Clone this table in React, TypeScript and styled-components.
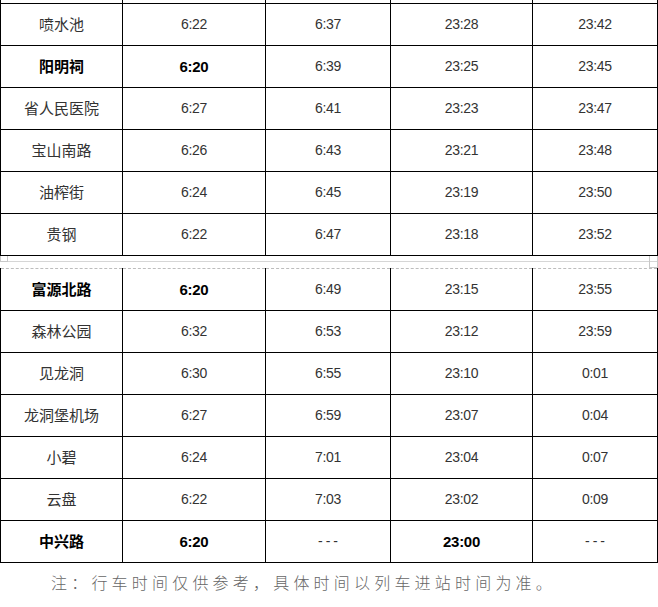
import React from 'react';
import styled, { createGlobalStyle } from 'styled-components';

const GlobalStyle = createGlobalStyle`
  html, body {
    margin: 0;
    padding: 0;
    background: #ffffff;
  }
`;

const Page = styled.div`
  width: 658px;
  background: #ffffff;
  font-family: "Noto Sans CJK SC", "Liberation Sans", sans-serif;
`;

const Table = styled.table`
  width: 657px;
  table-layout: fixed;
  border-collapse: collapse;
`;

const Row = styled.tr<{ $stub?: boolean }>`
  height: ${({ $stub }) => ($stub ? '3px' : '42px')};
`;

const Cell = styled.td<{
  $bold?: boolean;
  $num?: boolean;
  $stub?: boolean;
  $dashedTop?: boolean;
  $dash?: boolean;
}>`
  border: 1px solid #000;
  border-top: ${({ $stub, $dashedTop }) =>
    $stub ? 'none' : $dashedTop ? '1px dashed #bdbdbd' : '1px solid #000'};
  padding: 0 0 ${({ $num }) => ($num ? '0' : '2px')};
  text-align: center;
  vertical-align: middle;
  color: ${({ $bold }) => ($bold ? '#000' : '#333')};
  font-weight: ${({ $bold }) => ($bold ? 700 : 400)};
  font-family: ${({ $num }) =>
    $num ? '"Liberation Sans", "Noto Sans CJK SC", sans-serif' : '"Noto Sans CJK SC", sans-serif'};
  font-size: ${({ $num, $bold }) => ($num ? ($bold ? '15px' : '14px') : '15px')};
  letter-spacing: ${({ $num, $dash }) => ($dash ? '3px' : $num ? '-0.3px' : '0')};
  text-indent: ${({ $dash }) => ($dash ? '3px' : '0')};
  line-height: 1;
`;

const Break = styled.div`
  position: relative;
  height: 5px;
  border-bottom: 1px solid #d6d6d6;
  margin-bottom: 6px;
`;

const Marker = styled.span<{ $side: 'left' | 'right' }>`
  position: absolute;
  top: 0;
  ${({ $side }) =>
    $side === 'left' ? 'left: 0; width: 6px; height: 5px;' : 'right: 0; width: 7px; height: 11px;'}
  border: 1px solid #c8c8c8;
  border-top: none;
`;

const Note = styled.p`
  margin: 0;
  padding: 9px 0 0 51px;
  font-family: "Noto Sans CJK SC", sans-serif;
  font-size: 16px;
  font-weight: 300;
  letter-spacing: 4.2px;
  color: #666666;
  line-height: 20px;
`;

type Stop = { name: string; a: string; b: string; c: string; d: string; boldCols?: number[] };

const upper: Stop[] = [
  { name: '喷水池', a: '6:22', b: '6:37', c: '23:28', d: '23:42' },
  { name: '阳明祠', a: '6:20', b: '6:39', c: '23:25', d: '23:45', boldCols: [0, 1] },
  { name: '省人民医院', a: '6:27', b: '6:41', c: '23:23', d: '23:47' },
  { name: '宝山南路', a: '6:26', b: '6:43', c: '23:21', d: '23:48' },
  { name: '油榨街', a: '6:24', b: '6:45', c: '23:19', d: '23:50' },
  { name: '贵钢', a: '6:22', b: '6:47', c: '23:18', d: '23:52' },
];

const lower: Stop[] = [
  { name: '富源北路', a: '6:20', b: '6:49', c: '23:15', d: '23:55', boldCols: [0, 1] },
  { name: '森林公园', a: '6:32', b: '6:53', c: '23:12', d: '23:59' },
  { name: '见龙洞', a: '6:30', b: '6:55', c: '23:10', d: '0:01' },
  { name: '龙洞堡机场', a: '6:27', b: '6:59', c: '23:07', d: '0:04' },
  { name: '小碧', a: '6:24', b: '7:01', c: '23:04', d: '0:07' },
  { name: '云盘', a: '6:22', b: '7:03', c: '23:02', d: '0:09' },
  { name: '中兴路', a: '6:20', b: '---', c: '23:00', d: '---', boldCols: [0, 1, 3] },
];

const Cols = () => (
  <colgroup>
    <col style={{ width: 122 }} />
    <col style={{ width: 143 }} />
    <col style={{ width: 125 }} />
    <col style={{ width: 142 }} />
    <col style={{ width: 125 }} />
  </colgroup>
);

const StopRow: React.FC<{ stop: Stop; dashedTop?: boolean }> = ({ stop, dashedTop }) => {
  const values = [stop.name, stop.a, stop.b, stop.c, stop.d];
  return (
    <Row>
      {values.map((v, i) => (
        <Cell
          key={i}
          $num={i > 0}
          $dash={v === '---'}
          $bold={stop.boldCols?.includes(i) && v !== '---'}
          $dashedTop={dashedTop}
        >
          {v}
        </Cell>
      ))}
    </Row>
  );
};

const App: React.FC = () => {
  return (
    <Page>
      <GlobalStyle />
      <Table>
        <Cols />
        <tbody>
          <Row $stub>
            {[0, 1, 2, 3, 4].map((i) => (
              <Cell key={i} $stub />
            ))}
          </Row>
          {upper.map((s) => (
            <StopRow key={s.name} stop={s} />
          ))}
        </tbody>
      </Table>

      <Break>
        <Marker $side="left" />
        <Marker $side="right" />
      </Break>

      <Table>
        <Cols />
        <tbody>
          {lower.map((s, i) => (
            <StopRow key={s.name} stop={s} dashedTop={i === 0} />
          ))}
        </tbody>
      </Table>

      <Note>注：行车时间仅供参考，具体时间以列车进站时间为准。</Note>
    </Page>
  );
};

export default App;
